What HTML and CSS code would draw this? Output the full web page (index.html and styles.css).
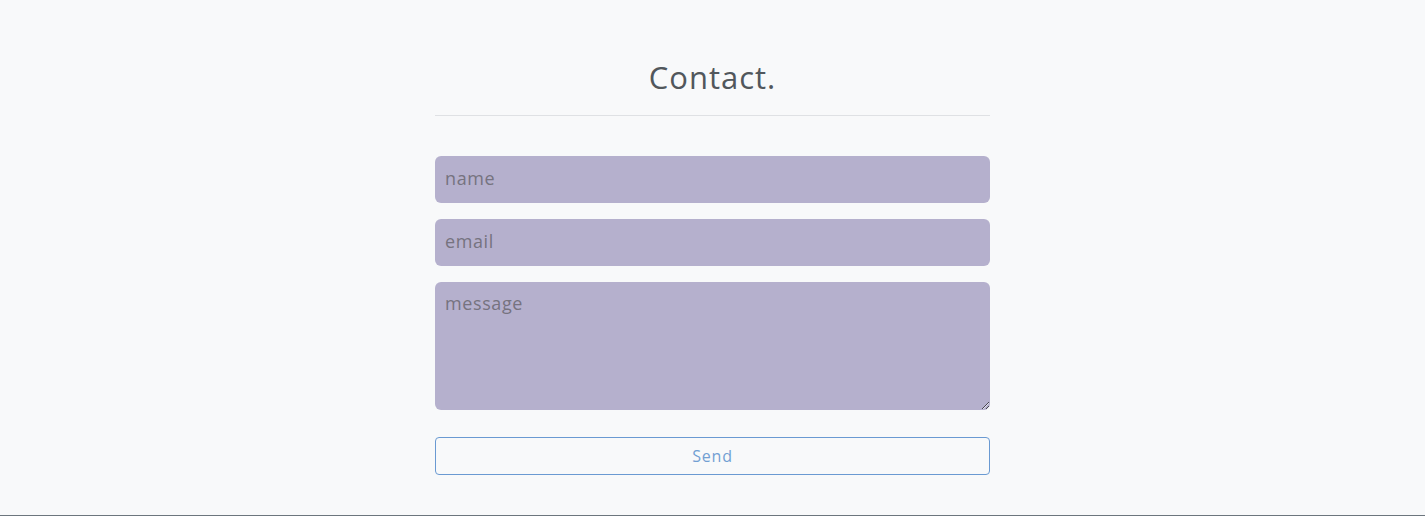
FILE: index.html
```html
<!DOCTYPE html>
<html lang="en">
<head>
<meta charset="utf-8">
<title>Contact</title>
<link rel="stylesheet" href="styles.css">
</head>
<body>
<main class="page">
  <section class="contact">
    <h1 class="title">Contact.</h1>
    <hr class="rule">
    <form class="form">
      <input class="field" type="text" placeholder="name">
      <input class="field" type="email" placeholder="email">
      <textarea class="field area" placeholder="message"></textarea>
      <button class="send" type="button">Send</button>
    </form>
  </section>
</main>
</body>
</html>
```
FILE: styles.css
```css
* { box-sizing: border-box; }
html, body { margin: 0; height: 100%; }
body {
  background: #f8f9fa;
  font-family: "Open Sans", "Noto Sans", sans-serif;
  color: #555b60;
}
.page {
  height: 516px;
  border-bottom: 1px solid #6c757d;
  display: flex;
  justify-content: center;
}
.contact {
  width: 555px;
  padding-top: 55px;
}
.title {
  margin: 0;
  text-align: center;
  font-weight: 500;
  font-size: 31px;
  line-height: 44px;
  letter-spacing: 1px;
  color: #51575c;
}
.rule {
  margin: 16px 0 40px;
  border: 0;
  border-top: 1px solid #dfe1e4;
}
.form {
  display: flex;
  flex-direction: column;
}
.field {
  height: 47px;
  margin-bottom: 16px;
  border: 0;
  border-radius: 6px;
  background: #b5b0cd;
  padding: 0 10px 3px;
  font-family: inherit;
  font-size: 18px;
  letter-spacing: 0.6px;
  color: #333;
  outline: none;
}
.field::placeholder { color: #76737f; }
.area {
  height: 128px;
  padding: 9px 10px 0;
  margin-bottom: 27px;
  resize: vertical;
}
.send {
  height: 38px;
  padding-bottom: 2px;
  background: transparent;
  border: 1px solid #6a9ad2;
  border-radius: 4px;
  color: #72a0d3;
  font-family: inherit;
  font-size: 16px;
  letter-spacing: 0.8px;
}
```
